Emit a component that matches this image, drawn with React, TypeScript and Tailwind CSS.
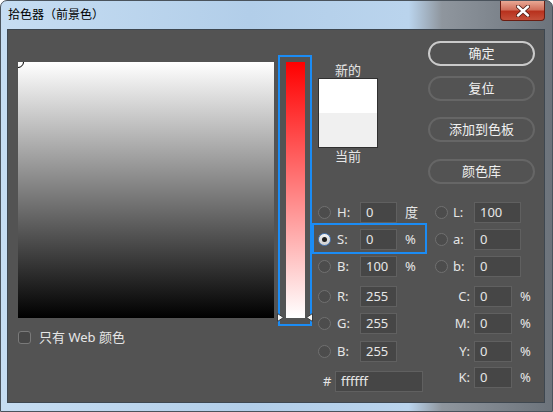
import React from 'react';

const FONT = "font-['Noto_Sans','Noto_Sans_CJK_SC',sans-serif]";

function Radio({ checked = false }: { checked?: boolean }) {
  if (checked) {
    return (
      <div className="w-[13px] h-[13px] shrink-0 rounded-full border border-[#4d7cb8] bg-[linear-gradient(180deg,#f4f4f4,#cfcfcf)] flex items-center justify-center">
        <div className="w-[5px] h-[5px] rounded-full bg-[#1e1e1e]" />
      </div>
    );
  }
  return <div className="w-[13px] h-[13px] shrink-0 rounded-full border border-[#707070] bg-[#4c4c4c]" />;
}

function Field({ value, className }: { value: string; className: string }) {
  return (
    <div
      className={`h-[21px] shrink-0 bg-[#464646] border border-[#606060] text-[13px] leading-[19px] pl-[5px] text-[#e6e6e6] ${className}`}
    >
      {value}
    </div>
  );
}

function PillButton({ label, primary = false }: { label: string; primary?: boolean }) {
  return (
    <div
      className={`w-[107px] h-[25px] rounded-full flex items-center justify-center text-[13px] text-[#f0f0f0] ${
        primary ? 'border-2 border-[#cacaca]' : 'border-2 border-[#666666]'
      }`}
    >
      {label}
    </div>
  );
}

// 左列: 单选 + 标签 + 输入框 + 单位
function HsbRow({ label, value, unit, checked }: { label: string; value: string; unit: string; checked?: boolean }) {
  return (
    <div className="flex items-center h-[21px] w-[117px]">
      <Radio checked={checked} />
      <span className="ml-[6px] w-[23px] text-[13px] text-[#e6e6e6]">{label}</span>
      <Field value={value} className="w-[37px]" />
      <span className="ml-[8px] text-[13px] text-[#e6e6e6]">{unit}</span>
    </div>
  );
}

function LabRow({ label, value }: { label: string; value: string }) {
  return (
    <div className="flex items-center h-[21px]">
      <Radio />
      <span className="ml-[5px] w-[21px] text-[13px] text-[#e6e6e6]">{label}</span>
      <Field value={value} className="w-[47px]" />
    </div>
  );
}

function CmykRow({ label, value }: { label: string; value: string }) {
  return (
    <div className="flex items-center h-[21px]">
      <span className="w-[39px] pr-[4px] text-right text-[13px] text-[#e6e6e6]">{label}</span>
      <Field value={value} className="w-[38px]" />
      <span className="ml-[8px] text-[13px] text-[#e6e6e6]">%</span>
    </div>
  );
}

function Triangle({ dir }: { dir: 'right' | 'left' }) {
  return (
    <svg width="7" height="9" viewBox="0 0 7 9">
      {dir === 'right' ? (
        <polygon points="0.5,0.5 6.5,4.5 0.5,8.5" fill="#f2f2f2" stroke="#3a3a3a" strokeWidth="1" />
      ) : (
        <polygon points="6.5,0.5 0.5,4.5 6.5,8.5" fill="#f2f2f2" stroke="#3a3a3a" strokeWidth="1" />
      )}
    </svg>
  );
}

export default function App() {
  return (
    <div
      className={`w-[553px] h-[412px] flex flex-col overflow-hidden rounded-t-[7px] border border-[#4a535c] bg-[linear-gradient(90deg,#c6ddf2_0%,#b2cee9_45%,#bad4ed_74%,#8f969e_80%,#6c737b_100%)] ${FONT}`}
    >
      {/* Title bar */}
      <div className="h-[28px] shrink-0 flex items-start">
        <span className="ml-[7px] mt-[6px] text-[12px] leading-[16px] text-black">拾色器（前景色）</span>
        <div className="ml-auto mr-[7px] w-[45px] h-[20px] rounded-b-[4px] border border-t-0 border-[#6b1d12] bg-[linear-gradient(180deg,#e9a894_0%,#d1705c_45%,#b8321e_55%,#c4503a_100%)] flex items-center justify-center">
          <svg width="14" height="12" viewBox="0 0 14 12">
            <path d="M2 1.5 L12 10.5 M12 1.5 L2 10.5" stroke="#4a1a12" strokeWidth="4" strokeLinecap="round" />
            <path d="M2 1.5 L12 10.5 M12 1.5 L2 10.5" stroke="#ffffff" strokeWidth="2.4" strokeLinecap="round" />
          </svg>
        </div>
      </div>

      {/* Client panel */}
      <div className="flex-1 ml-[6px] mr-[7px] mb-[8px] bg-[#535353] border border-[#3e4750] flex items-start pl-[10px]">
        {/* Color field + web colours */}
        <div className="pt-[32px] flex flex-col">
          <div className="relative w-[256px] h-[256px] overflow-hidden bg-[linear-gradient(180deg,#ffffff,#000000)]">
            <div className="absolute left-[-6px] top-[-6px] w-[12px] h-[12px] rounded-full border border-black" />
          </div>
          <div className="mt-[13px] flex items-center h-[13px]">
            <div className="w-[13px] h-[13px] rounded-[3px] border border-[#7a7a7a] bg-[#474747]" />
            <span className="ml-[8px] text-[13px] text-[#e6e6e6]">只有 Web 颜色</span>
          </div>
        </div>

        {/* Hue/saturation slider */}
        <div className="relative ml-[4px] mt-[25px] w-[34px] h-[271px] border-2 border-[#1b8cf5] pl-[6px] pt-[5px]">
          <div className="w-[19px] h-[256px] bg-[linear-gradient(180deg,#ff0000,#ffffff)]" />
          <div className="absolute left-[-3px] top-[256px] flex">
            <Triangle dir="right" />
          </div>
          <div className="absolute left-[26px] top-[256px] flex">
            <Triangle dir="left" />
          </div>
        </div>

        {/* Right region */}
        <div className="flex flex-col">
          <div className="h-[154px] flex">
            <div className="ml-[6px] mt-[32px] w-[60px] flex flex-col items-center text-[13px] text-[#e6e6e6]">
              <span className="leading-[16px]">新的</span>
              <div className="w-[60px] h-[70px] border border-[#303030] flex flex-col">
                <div className="flex-1 bg-white" />
                <div className="flex-1 bg-[#f0f0f0]" />
              </div>
              <span className="leading-[16px]">当前</span>
            </div>
            <div className="ml-[50px] pt-[11px] flex flex-col">
              <PillButton label="确定" primary />
              <div className="mt-[10px]">
                <PillButton label="复位" />
              </div>
              <div className="mt-[16px]">
                <PillButton label="添加到色板" />
              </div>
              <div className="mt-[17px]">
                <PillButton label="颜色库" />
              </div>
            </div>
          </div>

          {/* Numeric fields */}
          <div className="mt-[18px] ml-[6px] flex">
            <div className="w-[117px] flex flex-col">
              <HsbRow label="H:" value="0" unit="度" />
              <div className="relative mt-[6px]">
                <HsbRow label="S:" value="0" unit="%" checked />
                <div className="absolute left-[-6px] top-[-6px] w-[115px] h-[31px] border-2 border-[#1b8cf5]" />
              </div>
              <div className="mt-[6px]">
                <HsbRow label="B:" value="100" unit="%" />
              </div>
              <div className="mt-[9px]">
                <HsbRow label="R:" value="255" unit="" />
              </div>
              <div className="mt-[6px]">
                <HsbRow label="G:" value="255" unit="" />
              </div>
              <div className="mt-[7px]">
                <HsbRow label="B:" value="255" unit="" />
              </div>
              <div className="mt-[9px] flex items-center h-[21px]">
                <span className="ml-[5px] w-[12px] text-[13px] text-[#e6e6e6]">#</span>
                <Field value="ffffff" className="w-[88px]" />
              </div>
            </div>
            <div className="flex flex-col">
              <LabRow label="L:" value="100" />
              <div className="mt-[6px]">
                <LabRow label="a:" value="0" />
              </div>
              <div className="mt-[6px]">
                <LabRow label="b:" value="0" />
              </div>
              <div className="mt-[9px]">
                <CmykRow label="C:" value="0" />
              </div>
              <div className="mt-[6px]">
                <CmykRow label="M:" value="0" />
              </div>
              <div className="mt-[7px]">
                <CmykRow label="Y:" value="0" />
              </div>
              <div className="mt-[5px]">
                <CmykRow label="K:" value="0" />
              </div>
            </div>
          </div>
        </div>
      </div>
    </div>
  );
}
